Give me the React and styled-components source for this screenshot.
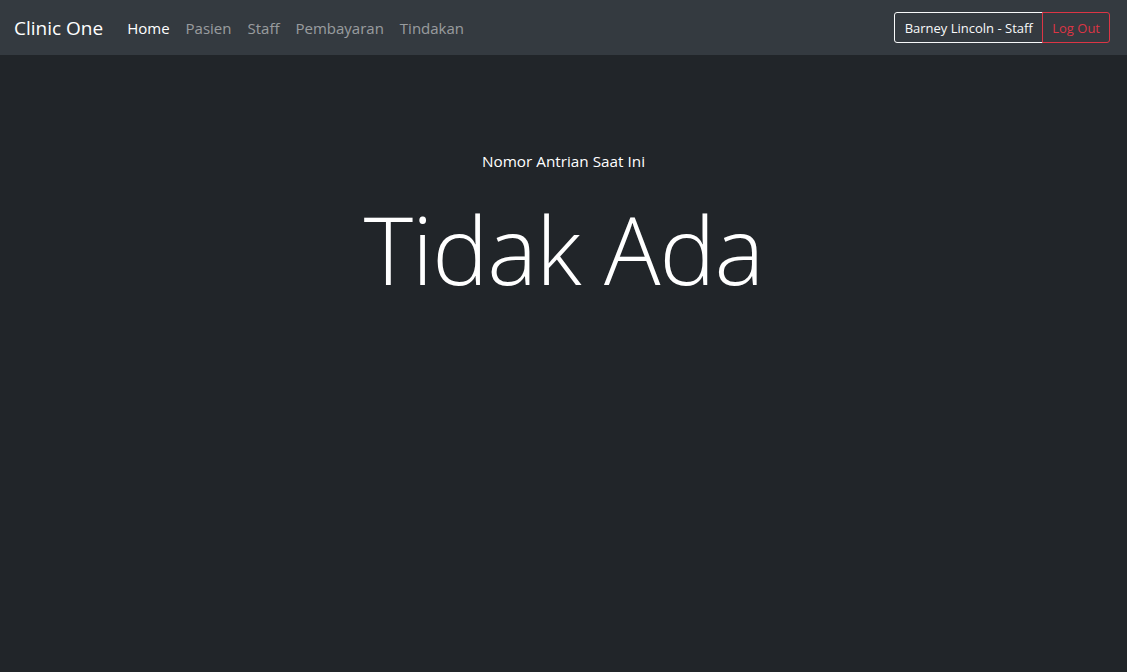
import React from 'react';
import styled, { createGlobalStyle } from 'styled-components';

const GlobalStyle = createGlobalStyle`
  html, body {
    margin: 0;
    padding: 0;
    background: #212529;
    font-family: "Open Sans", "Noto Sans", sans-serif;
    color: #fff;
  }
  * { box-sizing: border-box; }
`;

const Page = styled.div`
  min-height: 672px;
  background: #212529;
`;

const Navbar = styled.nav`
  display: flex;
  align-items: center;
  justify-content: space-between;
  height: 55px;
  padding: 0 17px 0 14px;
  background: #343a40;
`;

const Left = styled.div`
  display: flex;
  align-items: center;
`;

const Brand = styled.a`
  font-size: 19px;
  color: #fff;
  margin-right: 24px;
  text-decoration: none;
`;

const NavLinks = styled.div`
  display: flex;
  gap: 16px;
`;

const NavLink = styled.a`
  font-size: 15px;
  color: ${p => (p.active ? '#fff' : 'rgba(255,255,255,0.5)')};
  text-decoration: none;
`;

const BtnGroup = styled.div`
  display: flex;
`;

const Btn = styled.button`
  font-family: inherit;
  font-size: 13px;
  height: 31px;
  padding: 0 ${p => (p.first ? '9.5px' : '9px')};
  background: transparent;
  color: ${p => p.color};
  border: 1px solid ${p => p.color};
  border-radius: ${p => (p.first ? '3px 0 0 3px' : '0 3px 3px 0')};
  margin-left: ${p => (p.first ? '0' : '-1px')};
  position: relative;
`;

const Main = styled.main`
  display: flex;
  flex-direction: column;
  align-items: center;
  padding-top: 96px;
`;

const Label = styled.h5`
  margin: 0;
  font-size: 15.3px;
  font-weight: 400;
`;

const Display = styled.h1`
  margin: 22px 0 0;
  font-size: 94px;
  font-weight: 300;
  line-height: 1.2;
  letter-spacing: -1px;
`;

export default function App() {
  return (
    <Page>
      <GlobalStyle />
      <Navbar>
        <Left>
          <Brand href="#">Clinic One</Brand>
          <NavLinks>
            <NavLink active href="#">Home</NavLink>
            <NavLink href="#">Pasien</NavLink>
            <NavLink href="#">Staff</NavLink>
            <NavLink href="#">Pembayaran</NavLink>
            <NavLink href="#">Tindakan</NavLink>
          </NavLinks>
        </Left>
        <BtnGroup>
          <Btn first color="#f8f9fa">Barney Lincoln - Staff</Btn>
          <Btn color="#dc3545">Log Out</Btn>
        </BtnGroup>
      </Navbar>
      <Main>
        <Label>Nomor Antrian Saat Ini</Label>
        <Display>Tidak Ada</Display>
      </Main>
    </Page>
  );
}
